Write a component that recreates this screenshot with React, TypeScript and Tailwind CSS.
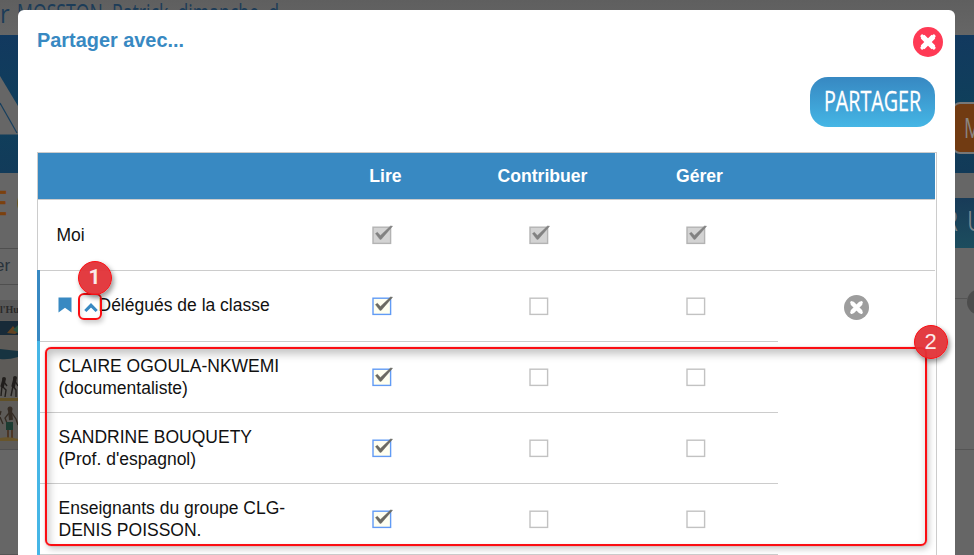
import type { ReactNode } from "react";

type BoxState = "locked" | "on" | "off";

function CheckBox({ state }: { state: BoxState }) {
  const fill = state === "locked" ? "#d3d3d3" : state === "on" ? "#fffff0" : "#ffffff";
  const stroke = state === "locked" ? "#b3b3b3" : state === "on" ? "#619bf5" : "#c2c2c2";
  return (
    <svg width="22" height="20" viewBox="0 0 22 20" className="block">
      <rect x="1" y="2.2" width="17.6" height="16.2" fill={fill} stroke={stroke} strokeWidth="1.4" />
      {state !== "off" && (
        <path
          d="M3.400 8.600 L5.400 7.200 L8.400 10.400 L18.600 0.900 L20.600 1.200 L9.300 14.200 L8 14.600 Z"
          fill={state === "locked" ? "#828282" : "#6b6a62"}
          stroke={state === "locked" ? "#828282" : "#6b6a62"}
          strokeWidth="0.400"
          strokeLinejoin="round"
        />
      )}
    </svg>
  );
}

function RoundCross({ size, color }: { size: number; color: string }) {
  return (
    <svg width={size} height={size} viewBox="0 0 30 30" className="block">
      <circle cx="15" cy="15" r="15" fill={color} />
      <path d="M9.6 9.6 L20.4 20.4 M20.4 9.6 L9.6 20.4" stroke="#fff" strokeWidth="5.2" />
      <path d="M9.200 9.200 L20.800 20.800 M20.800 9.200 L9.200 20.800" stroke="#fff" strokeWidth="3.600" strokeLinecap="round" />
    </svg>
  );
}

function Marker({ children }: { children: ReactNode }) {
  return (
    <div className="flex h-[34px] w-[34px] items-center justify-center rounded-full border-[1.5px] border-[#fb0f14] bg-[#e23237]/95 text-[22px] leading-none text-[#fbe9e9] shadow-[2px_3px_5px_rgba(0,0,0,0.4)]">
      {children}
    </div>
  );
}

function Row({ states, children, action }: { states: BoxState[]; children: ReactNode; action?: ReactNode }) {
  return (
    <div className="grid h-full grid-cols-[269px_157px_157px_157px_157px] items-center">
      <div>{children}</div>
      {states.map((s, i) => (
        <div key={i} className="pl-[65px]">
          <CheckBox state={s} />
        </div>
      ))}
      <div className="flex justify-center pt-[3px]">{action}</div>
    </div>
  );
}

const members = [
  ["CLAIRE OGOULA-NKWEMI", "(documentaliste)"],
  ["SANDRINE BOUQUETY", "(Prof. d'espagnol)"],
  ["Enseignants du groupe CLG-", "DENIS POISSON."],
];

function Backdrop() {
  return (
    <div className="flex h-full flex-col bg-[#666]">
      <div className="h-[35px] shrink-0 overflow-hidden bg-gradient-to-b from-[#5f5f5f] to-[#666] font-['Open_Sans',sans-serif] text-[26px] leading-[24px] text-[#1c3c58]">
        <div className="flex w-max whitespace-pre">
          <span className="w-[17px] origin-left scale-x-[0.9] pt-px">r</span>
          <span className="origin-left scale-x-[0.68]">MOSSTON  Patrick  dimanche  d</span>
        </div>
      </div>
      <div className="flex flex-1 justify-between">
        <div className="flex w-[18px] flex-col overflow-hidden">
          <svg width="18" height="138" className="block shrink-0">
            <defs>
              <linearGradient id="band" x1="0" y1="0" x2="0" y2="1">
                <stop offset="0" stopColor="#12395f" />
                <stop offset="0.6" stopColor="#0f3f5b" />
                <stop offset="1" stopColor="#123b5a" />
              </linearGradient>
            </defs>
            <rect width="18" height="138" fill="url(#band)" />
            <path d="M0 41 L18 71 V99.500 H0 Z" fill="#666" />
            <path d="M0 68 L17 98" stroke="#173f5e" strokeWidth="1.200" />
          </svg>
          <div className="flex h-[76px] items-center border-b border-[#4f4f4f] pb-[15px] font-['Open_Sans',sans-serif] text-[32px] leading-none text-[#7b410e] [-webkit-text-stroke:0.6px_#7b410e]">
            <span className="-ml-[10px] w-[26px] shrink-0">E</span>
            <span>C</span>
          </div>
          <div className="h-[36px] border-b border-[#4f4f4f] text-[17px] leading-[34px] text-[#29323a]">
            <span className="-ml-[5px]">er</span>
          </div>
          <div className="mt-[15px] h-[20px] bg-[#595959] font-['Liberation_Serif',serif] text-[10px] font-bold leading-[19px] text-[#292929]">l'Hu</div>
          <svg width="18" height="130" viewBox="0 0 18 130" className="block shrink-0">
            <rect width="18" height="130" fill="#5d5b58" />
            <rect y="1" width="18" height="14" fill="#172a38" />
            <path d="M7 13 L13 6 L18 12 L15 14 Z" fill="#624321" />
            <path d="M13 10 L18 5 V13 Z" fill="#285342" />
            <path d="M0 29 L18 31 V37 Q8 40 0 39 Z" fill="#173441" />
            <circle cx="4" cy="59" r="2" fill="#211e1c" />
            <circle cx="15" cy="58" r="2" fill="#211e1c" />
            <path d="M4 60 l-2 7 M15 59 l-2 8" stroke="#211e1c" strokeWidth="3.500" />
            <path d="M2 66 l4 4 -1 7 M2 66 l-1 10 M13 66 l3 4 0 7 M13 66 l-2 10 M4 62 l3 4 M15 61 l3 5" fill="none" stroke="#211e1c" strokeWidth="1.400" />
            <path d="M0 78 H18 V81 H0 Z" fill="#605027" />
            <circle cx="10" cy="89" r="2.500" fill="#342b23" />
            <path d="M10 90 l1 10" stroke="#342b23" strokeWidth="4" />
            <path d="M9 93 l-4 5 2 5 M12 93 l4 6 2 6 M0 97 l3 7 M1 91 l-1 4" fill="none" stroke="#342b23" strokeWidth="1.300" />
            <rect x="6" y="102" width="7" height="8" fill="#1c3c32" />
            <path d="M8 110 v8 M12 110 v8" stroke="#4b3423" strokeWidth="1.800" />
            <path d="M0 118 Q9 116 18 119 V121 H0 Z" fill="#68552b" />
            <rect y="129" width="18" height="1" fill="#505050" />
          </svg>
          <div className="mt-[104px] h-px bg-[#555]" />
        </div>
        <div className="flex w-[19px] flex-col overflow-hidden">
          <div className="h-[138px] bg-gradient-to-b from-[#12395f] via-[#0f3f5b] to-[#123a58] pt-[67px]">
            <div className="-ml-[3px] flex h-[52px] w-[40px] items-center rounded-[8px] border-2 border-[#777] bg-[#713b12] pl-[10px] font-['Open_Sans',sans-serif] text-[27px] text-[#8a8580]">
              <span className="inline-block origin-left scale-x-[0.7]">M</span>
            </div>
          </div>
          <div className="mt-[25px] flex h-[50px] items-center overflow-hidden bg-gradient-to-b from-[#183b58] to-[#1c4d5e] pb-[3px] font-['Open_Sans',sans-serif] text-[27px] text-[#7e888e]">
            <span className="-ml-[9px] origin-left scale-x-[0.7] whitespace-pre">R  U</span>
          </div>
          <div className="flex h-[202px] flex-col border-b border-[#555] pt-[41px]">
            <div className="flex items-center">
              <div className="-mt-[7px] h-px w-[12px] shrink-0 bg-[#555]" />
              <div className="h-[26px] w-[26px] shrink-0 rounded-full bg-[#4c4c4c]" />
            </div>
          </div>
        </div>
      </div>
    </div>
  );
}

export default function App() {
  return (
    <div className="relative h-[555px] w-[974px] overflow-hidden font-['Liberation_Sans',Arial,sans-serif] text-[17.5px] text-[#111]">
      <Backdrop />
      <div className="absolute left-[18px] top-[10px] h-[560px] w-[937px] rounded-t-[6px] bg-white pl-[19px]">
        <div className="flex h-[67px] justify-between pr-[12px]">
          <h1 className="pt-[18px] text-[19.900px] font-bold leading-[24px] text-[#3889c2]">Partager avec...</h1>
          <div className="pt-[16.500px]">
            <RoundCross size={30} color="#ff3a55" />
          </div>
        </div>
        <div className="flex justify-end pr-[20px]">
          <button className="flex h-[50px] w-[125px] items-center justify-center rounded-[18px] bg-gradient-to-b from-[#3788c2] to-[#45b6e5] font-['Open_Sans',sans-serif] text-[27px] leading-none text-white">
            <span className="inline-block scale-x-[0.73] pb-[3px] [-webkit-text-stroke:0.3px_white]">PARTAGER</span>
          </button>
        </div>

        <div className="mt-[25px] h-[420px] w-[900px] border border-b-0 border-[#ccc]">
          <div className="mr-px grid h-[47px] grid-cols-[269px_157px_157px_157px_157px] items-center border-b border-[#ccc] bg-[#3889c2] text-center text-[17.600px] font-bold text-white">
            <span />
            <span>Lire</span>
            <span>Contribuer</span>
            <span>Gérer</span>
            <span />
          </div>
          <div className="mr-px h-[71px] border-b border-[#ccc]">
            <Row states={["locked", "locked", "locked"]}>
              <span className="pl-[18.500px]">Moi</span>
            </Row>
          </div>
          <div className="-ml-px -mt-px h-[71px] border-l-[3px] border-[#3889c2] pt-px">
            <div className="-ml-[2px] h-[70px]">
              <Row states={["on", "off", "off"]} action={<RoundCross size={25} color="#9d9d9d" />}>
                <div className="flex items-center pb-[2px] pl-[20px]">
                  <svg width="14" height="16" className="block">
                    <path d="M0.500 0.500 H13.500 V15.500 L7 10.800 L0.500 15.500 Z" fill="#3889c2" />
                  </svg>
                  <svg width="14" height="11" className="ml-[12px] mt-[4px] block">
                    <path d="M1.300 9 L7 3.300 L12.700 9" fill="none" stroke="#3889c2" strokeWidth="3.100" />
                  </svg>
                  <span className="whitespace-nowrap pl-[0.500px]">Délégués de la classe</span>
                </div>
              </Row>
            </div>
          </div>
          {members.map(([name, detail]) => (
            <div key={name} className="-ml-px h-[71px] border-l-[3px] border-[#46b6e6]">
              <div className="h-px w-[738px] bg-[#ccc]" />
              <div className="-ml-[2px] h-[70px]">
                <Row states={["on", "off", "off"]}>
                  <p className="whitespace-nowrap pl-[20.500px] leading-[22px]">
                    {name}
                    <br />
                    {detail}
                  </p>
                </Row>
              </div>
            </div>
          ))}
          <div className="-ml-px h-[10px] border-l-[3px] border-[#46b6e6]">
            <div className="h-px w-[738px] bg-[#ccc]" />
          </div>
        </div>
      </div>

      {/* numbered callouts over the dialog */}
      <div className="absolute left-[45px] top-[347px] h-[199px] w-[882px] rounded-[6px] border-2 border-[#fb0d12] shadow-[2px_3px_6px_rgba(0,0,0,0.22),inset_2px_5px_8px_rgba(0,0,0,0.24),0_0_1px_rgba(251,13,18,0.8)]" />
      <div className="absolute left-[78px] top-[293px] h-[27px] w-[24px] rounded-[6px] border-2 border-[#fb0d12] shadow-[2px_3px_5px_rgba(0,0,0,0.2),inset_1px_2px_4px_rgba(0,0,0,0.12)]" />
      <div className="absolute left-[77.500px] top-[260.500px]">
        <Marker>
          <span className="font-['Roboto',sans-serif] text-[21px] font-bold">1</span>
        </Marker>
      </div>
      <div className="absolute left-[913.500px] top-[325px]">
        <Marker>2</Marker>
      </div>
    </div>
  );
}
